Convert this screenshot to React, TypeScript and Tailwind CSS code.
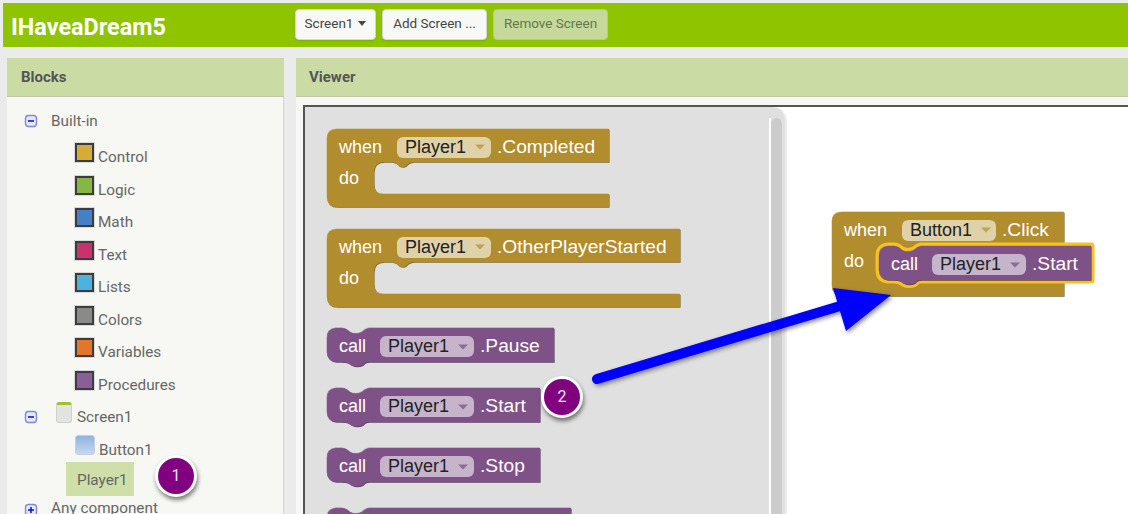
import React from "react";

const ui = "font-['Roboto',sans-serif]";
const blockFont = "font-['Liberation_Sans',Arial,sans-serif]";

const categories = [
  { name: "Control", color: "bg-[#d6ac38]" },
  { name: "Logic", color: "bg-[#85b744]" },
  { name: "Math", color: "bg-[#4580c4]" },
  { name: "Text", color: "bg-[#c9326c]" },
  { name: "Lists", color: "bg-[#4db2de]" },
  { name: "Colors", color: "bg-[#8a8a8a]" },
  { name: "Variables", color: "bg-[#e4762c]" },
  { name: "Procedures", color: "bg-[#8a5f99]" },
];

function Toggle({ plus }: { plus?: boolean }) {
  return (
    <svg width="14" height="14" viewBox="0 0 14 14" className="shrink-0">
      <rect x="1.5" y="1.5" width="11" height="11" rx="3" fill="#e6e9f7" stroke="#8089dc" strokeWidth="1.4" />
      <rect x="4" y="6.2" width="6" height="1.6" fill="#1616d8" />
      {plus && <rect x="6.2" y="4" width="1.6" height="6" fill="#1616d8" />}
    </svg>
  );
}

function Sidebar() {
  return (
    <div className={`w-[277px] h-full flex flex-col shrink-0 ${ui}`}>
      <div className="h-[39px] shrink-0 bg-[#cadba4] border-b border-[#bfc7ab] flex items-center pl-[14px] text-[15px] font-bold text-[#555]">
        Blocks
      </div>
      <div className="flex-1 bg-[#f7f8f3] border-r border-[#d4d4d0] overflow-hidden text-[15.3px] text-[#666] pt-[8px]">
        <div className="h-[32px] flex items-center pl-[17px] mb-[4px]">
          <Toggle />
          <span className="ml-[13px]">Built-in</span>
        </div>
        {categories.map((c) => (
          <div key={c.name} className="h-[32.5px] flex items-start pl-[68px]">
            <div className={`w-[19px] h-[19px] mt-[2px] shrink-0 border-2 border-[#3c3c3c] outline outline-1 outline-[#d8d8d8] ${c.color}`} />
            <span className="ml-[4px] mt-[6px] leading-[20px]">{c.name}</span>
          </div>
        ))}
        <div className="h-[32.5px] flex items-center pl-[17px]">
          <Toggle />
          <div className="w-[16px] h-[21px] ml-[18px] -mt-[9px] rounded-[3px] bg-[#e3e3e1] border border-[#cfcfcc] border-t-[3px] border-t-[#9cc42c] shrink-0" />
          <span className="ml-[5px]">Screen1</span>
        </div>
        <div className="h-[32.5px] flex items-start pl-[68px]">
          <div className="w-[20px] h-[20px] mt-[1px] shrink-0 rounded-[3px] border border-[#c3cfe0] bg-gradient-to-b from-[#8fb3e0] to-[#c5d8ef]" />
          <span className="ml-[4px] mt-[6px] leading-[20px]">Button1</span>
        </div>
        <div className="ml-[59px] w-[68px] h-[34px] -mt-[4px] bg-[#cfdfa9] flex items-center pl-[11px] pt-[3px]">Player1</div>
        <div className="h-[32px] -mt-[4px] flex items-start pl-[17px]">
          <div className="mt-[11px]">
            <Toggle plus />
          </div>
          <span className="ml-[13px] mt-[6px] leading-[20px]">Any component</span>
        </div>
      </div>
    </div>
  );
}

// svg shape with a lit edge and a shaded edge, like Blockly draws them
function Shape({ d, fill, light, dark, stroke }: { d: string; fill: string; light: string; dark: string; stroke?: string }) {
  return (
    <svg className="absolute left-0 top-0 overflow-visible" width="1" height="1">
      {stroke && <path d={d} fill={stroke} stroke={stroke} strokeWidth="7" strokeLinejoin="round" />}
      <path d={d} fill={dark} transform="translate(0.6 0.8)" />
      <path d={d} fill={light} transform="translate(-0.4 -0.6)" />
      <path d={d} fill={fill} />
    </svg>
  );
}

function Pill({ name, bg, arrow }: { name: string; bg: string; arrow: string }) {
  return (
    <div className={`w-[94px] h-[21px] shrink-0 rounded-[6px] flex items-center pl-[8px] text-[#222] ${bg}`}>
      <span>{name}</span>
      <svg width="10" height="6" viewBox="0 0 10 6" className="ml-[9px]">
        <path d="M0 0.5H10L5 5.5Z" fill={arrow} />
      </svg>
    </div>
  );
}

function EventBlock({
  w,
  h = 78,
  innerBottom = 65,
  name,
  label,
  children,
}: {
  w: number;
  h?: number;
  innerBottom?: number;
  name: string;
  label: string;
  children?: React.ReactNode;
}) {
  const d = `M0 10Q0 0 10 0H${w}V33H86Q81 34 79 37Q76 39 72 37Q70 34 65 33H57Q47 33 47 43V${innerBottom - 10}Q47 ${innerBottom} 57 ${innerBottom}H${w}V${h}H10Q0 ${h} 0 ${h - 10}Z`;
  return (
    <div className={`relative shrink-0 text-[18px] text-white ${blockFont}`} style={{ width: w, height: h }}>
      <Shape d={d} fill="#b18d2e" light="#d0b56e" dark="#7f6a2c" />
      <div className="relative h-[33px] flex items-center pl-[12px] pt-[3px]">
        <span className="w-[58px] shrink-0">when</span>
        <Pill name={name} bg="bg-[#dfd1a8]" arrow="#c0a255" />
        <span className="ml-[6px] text-[19.2px] whitespace-nowrap">{label}</span>
      </div>
      <div className="relative h-[32px] flex items-center pl-[12px]">do</div>
      {children}
    </div>
  );
}

function CallBlock({ w, label, selected }: { w: number; label?: string; selected?: boolean }) {
  const d = `M0 10Q0 1 9 0H15Q19 0 23 4Q29 7 35 4Q38 1 42 0H${w}V34H42Q38 34 36 37Q30 40 24 37Q21 34 15 34H9Q0 33 0 24Z`;
  return (
    <div className={`relative shrink-0 h-[34px] text-[18px] text-white ${blockFont}`} style={{ width: w }}>
      <Shape d={d} fill="#7f5287" light="#a788ae" dark="#5e4066" stroke={selected ? "#f7c21a" : undefined} />
      {label && (
        <div className="relative h-full flex items-center pl-[12px] pt-[3px]">
          <span className="w-[41px] shrink-0">call</span>
          <Pill name="Player1" bg="bg-[#c6b4cb]" arrow="#8f6c98" />
          <span className="ml-[6px] text-[19.2px] whitespace-nowrap">{label}</span>
        </div>
      )}
    </div>
  );
}

function Flyout() {
  return (
    <div className="w-[482px] h-full bg-[#e0e0e0] rounded-tr-[14px] flex border-r-2 border-[#eeeeee] overflow-hidden">
      <div className="flex-1 pl-[22px] pt-[22px] flex flex-col items-start overflow-hidden">
        <EventBlock w={282} name="Player1" label=".Completed" />
        <div className="h-[22px] shrink-0" />
        <EventBlock w={353} name="Player1" label=".OtherPlayerStarted" />
        <div className="h-[21px] shrink-0" />
        <CallBlock w={227} label=".Pause" />
        <div className="h-[26px] shrink-0" />
        <CallBlock w={213} label=".Start" />
        <div className="h-[26px] shrink-0" />
        <CallBlock w={213} label=".Stop" />
        <div className="h-[26px] shrink-0" />
        {/* only the top edge of this one shows above the fold */}
        <CallBlock w={244} />
      </div>
      <div className="w-[13px] mt-[11px] mr-[3px] border-l-2 border-white shrink-0">
        <div className="w-full h-full bg-[#cccccc] rounded-t-full" />
      </div>
    </div>
  );
}

function Badge({ n, className }: { n: number; className: string }) {
  return (
    <div
      className={`absolute w-[42px] h-[42px] rounded-full bg-[#800080] border-[3px] border-white shadow-[1px_3px_4px_rgba(0,0,0,0.5)] flex items-center justify-center text-[16px] text-[#f0e0f0] ${ui} ${className}`}
    >
      {n}
    </div>
  );
}

export default function App() {
  return (
    <div className="relative w-[1128px] h-[514px] overflow-hidden bg-[#ebebeb] pt-[3px]">
      <div className={`h-[44px] ml-[3px] bg-[#8ec500] flex items-center pl-[8px] ${ui}`}>
        <div className="w-[284px] pt-[5px] text-[23.4px] font-bold text-white">IHaveaDream5</div>
        <div className="flex gap-[6px] -mt-[1px] text-[13.5px] text-[#444]">
          <button className="w-[81px] h-[31px] pb-[2px] bg-[#f8f8f6] rounded-[4px] border border-[#d6d6d6] shadow-sm flex items-center justify-center gap-[5px]">
            Screen1
            <svg width="8" height="5" viewBox="0 0 8 5">
              <path d="M0 0H8L4 5Z" fill="#444" />
            </svg>
          </button>
          <button className="w-[105px] h-[31px] pb-[2px] bg-[#f8f8f6] rounded-[4px] border border-[#d6d6d6] shadow-sm">Add Screen ...</button>
          <button className="w-[115px] h-[31px] pb-[2px] bg-[#c4d99a] rounded-[4px] border border-[#b5cc86] text-[#66774a]">Remove Screen</button>
        </div>
      </div>

      <div className="flex h-[456px] mt-[11px] pl-[7px] gap-[12px]">
        <Sidebar />
        <div className={`flex-1 flex flex-col ${ui}`}>
          <div className="h-[39px] shrink-0 bg-[#cadba4] border-b border-[#bfc7ab] flex items-center pl-[13px] text-[15px] font-bold text-[#555]">
            Viewer
          </div>
          <div className="flex-1 min-h-0 bg-[#f7f8f3] pl-[7px] pt-[8px]">
            <div className="relative h-full bg-white border-l-2 border-t-2 border-[#555]">
              <Flyout />
              {/* block dropped on the workspace */}
              <div className="absolute left-[527px] top-[105px]">
                <EventBlock w={232} h={84} innerBottom={69} name="Button1" label=".Click">
                  <div className="absolute left-[47px] top-[34px]">
                    <CallBlock w={212} label=".Start" selected />
                  </div>
                </EventBlock>
              </div>
            </div>
          </div>
        </div>
      </div>

      <Badge n={1} className="left-[155px] top-[455px]" />
      <Badge n={2} className="left-[541px] top-[376px]" />

      <svg className="absolute left-0 top-0 drop-shadow-[2px_2px_2px_rgba(0,0,0,0.45)]" width="1128" height="514">
        <path d="M597 379L850 303" stroke="#0000ff" strokeWidth="10" strokeLinecap="round" />
        <path d="M833 288L891 295L846 331Z" fill="#0000ff" />
      </svg>
    </div>
  );
}
